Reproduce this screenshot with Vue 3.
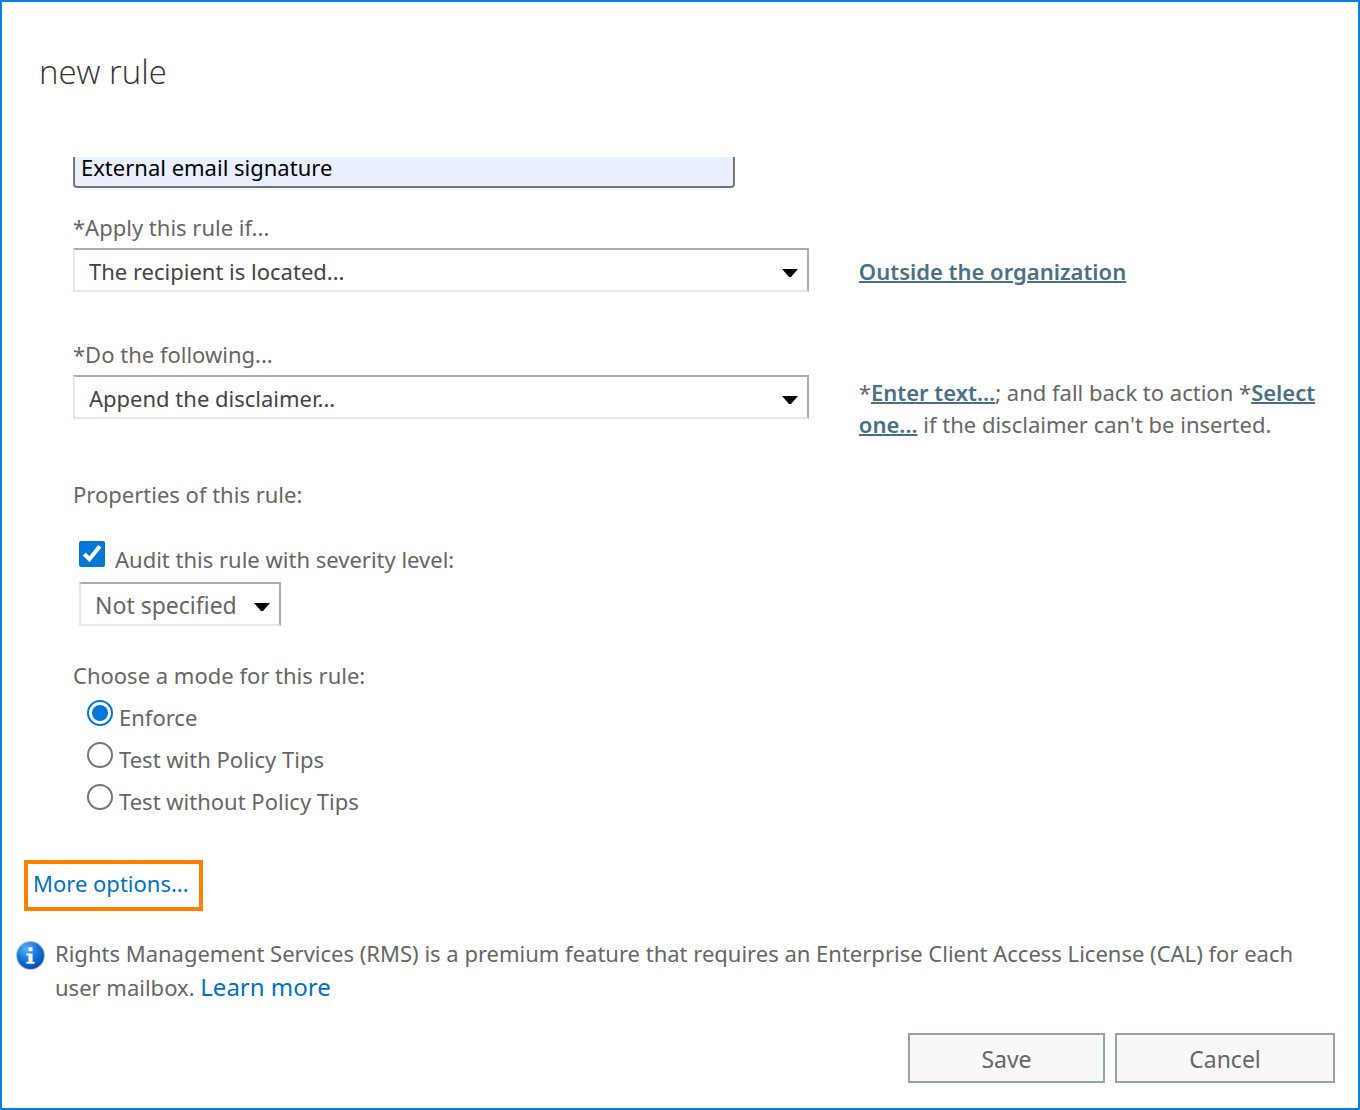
<script setup>
import { ref } from 'vue'

const name = ref('External email signature')
const condition = ref('The recipient is located...')
const action = ref('Append the disclaimer...')
const audit = ref(true)
const severity = ref('Not specified')
const mode = ref('Enforce')
const modes = ['Enforce', 'Test with Policy Tips', 'Test without Policy Tips']
</script>

<template>
  <main class="dialog">
    <h1 class="title">new rule</h1>

    <form class="form" @submit.prevent>
      <div class="scroller">
        <input v-model="name" class="name" type="text" aria-label="Name" />

        <div class="rule">
          <label class="caption" for="condition">*Apply this rule if...</label>
          <div class="picker">
            <select id="condition" v-model="condition" class="select">
              <option>The recipient is located...</option>
            </select>
            <svg class="arrow" viewBox="0 0 16 10"><path d="M0 1H16L9 9H7Z" /></svg>
          </div>
          <p class="detail"><a class="value" href="#">Outside the organization</a></p>
        </div>

        <div class="rule">
          <label class="caption" for="action">*Do the following...</label>
          <div class="picker">
            <select id="action" v-model="action" class="select">
              <option>Append the disclaimer...</option>
            </select>
            <svg class="arrow" viewBox="0 0 16 10"><path d="M0 1H16L9 9H7Z" /></svg>
          </div>
          <p class="detail">
            *<a class="value" href="#">Enter text...</a>; and fall back to action *<a class="value" href="#">Select one...</a> if the disclaimer can't be inserted.
          </p>
        </div>

        <section class="properties">
          <h2 class="heading">Properties of this rule:</h2>
          <div class="audit">
            <label class="option audit-option">
              <input v-model="audit" class="check" type="checkbox" />
              <span class="option-text">Audit this rule with severity level:</span>
            </label>
            <div class="picker severity">
              <select v-model="severity" class="select" aria-label="Severity level">
                <option>Not specified</option>
              </select>
              <svg class="arrow" viewBox="0 0 16 10"><path d="M0 1H16L9 9H7Z" /></svg>
            </div>
          </div>
        </section>

        <fieldset class="modes">
          <legend class="heading">Choose a mode for this rule:</legend>
          <label v-for="m in modes" :key="m" class="option mode-option">
            <input v-model="mode" class="radio" type="radio" name="mode" :value="m" />
            <span class="option-text">{{ m }}</span>
          </label>
        </fieldset>
      </div>

      <a class="more" href="#">More options...</a>

      <div class="notice">
        <svg class="info" viewBox="0 0 28 28" aria-hidden="true">
          <defs>
            <radialGradient id="ball" cx="35%" cy="25%" r="80%">
              <stop offset="0" stop-color="#58b0f4" />
              <stop offset="0.5" stop-color="#1878dc" />
              <stop offset="1" stop-color="#0448b4" />
            </radialGradient>
          </defs>
          <circle cx="14" cy="14" r="14" fill="#a9c1e2" />
          <circle cx="14" cy="14" r="13" fill="url(#ball)" />
          <path d="M12 6h4v4h-4zM10 12h6v8h2v2h-8v-2h2v-6h-2z" fill="#f2f8ff" />
        </svg>
        <p class="notice-text">
          Rights Management Services (RMS) is a premium feature that requires an Enterprise Client Access License (CAL) for each user mailbox. <a class="learn" href="#">Learn more</a>
        </p>
      </div>

      <div class="actions">
        <button class="button save" type="submit">Save</button>
        <button class="button cancel" type="button">Cancel</button>
      </div>
    </form>
  </main>
</template>

<style>
body {
  margin: 0;
  background: #fff;
}
</style>

<style scoped>
* {
  box-sizing: border-box;
}

.dialog {
  min-height: 100vh;
  padding: 46px 23px 25px 14px;
  border: 2px solid #0080e8;
  background: #fff;
  color: #666;
  font: 22px/32px "Segoe UI", "Noto Sans", "Open Sans", sans-serif;
}

.title {
  margin: 0 0 61px;
  padding-left: 23px;
  color: #333;
  font: 300 33px/48px "Segoe UI Light", "Open Sans", "Noto Sans", sans-serif;
}

.scroller {
  overflow: hidden;
  padding-left: 57px;
}

.name {
  display: block;
  width: 100%;
  max-width: 662px;
  height: 44px;
  margin: -13px 0 24px;
  padding: 2px 6px 0;
  border: 2px solid #767676;
  border-radius: 4px;
  background: #e8f0fe;
  color: #000;
  font: inherit;
}

.rule {
  display: grid;
  grid-template-columns: 17fr 11fr;
  column-gap: 50px;
  align-items: start;
  margin-bottom: 47px;
}

.caption {
  grid-column: 1 / -1;
  height: 36px;
  line-height: 30px;
}

.picker {
  position: relative;
}

.select {
  display: block;
  width: 100%;
  height: 44px;
  padding: 2px 14px 0;
  border: 2px solid;
  border-color: #ababb2 #ababb2 #e3e8f0 #e3e8f0;
  border-radius: 0;
  appearance: none;
  background: #fff;
  color: #444;
  font: inherit;
}

.arrow {
  position: absolute;
  top: 20px;
  right: 11px;
  width: 16px;
  height: 10px;
  pointer-events: none;
}

.detail {
  margin: 0;
  padding-top: 7px;
}

.rule + .rule {
  margin-bottom: 38px;
}

.rule + .rule .detail {
  padding: 1px 0;
}

.value {
  color: #4a7085;
  font-weight: 600;
  text-decoration-thickness: 2px;
}

.heading {
  height: 32px;
  margin: 0;
  padding: 0;
  font: inherit;
  line-height: 30px;
}

.audit {
  padding: 30px 0 0 6px;
}

.option {
  display: flex;
  align-items: flex-start;
}

.option-text {
  padding-top: 2px;
}

.check,
.radio {
  flex: none;
  width: 26px;
  height: 26px;
  margin: 0;
  accent-color: #0078d7;
}

.radio {
  border: 2px solid #767676;
  border-radius: 50%;
  appearance: none;
  background: #fff;
}

.radio:checked {
  padding: 3px;
  border-color: #0078d7;
}

.radio:checked::before {
  content: "";
  display: block;
  height: 100%;
  border-radius: 50%;
  background: #0078d7;
}

.audit-option {
  gap: 10px;
  height: 41px;
}

.severity {
  width: 202px;
}

.severity .select {
  color: #666;
  font-size: 23px;
}

.modes {
  margin: 34px 0 0;
  padding: 0;
  border: 0;
}

.mode-option {
  gap: 6px;
  height: 42px;
  padding-left: 14px;
}

.mode-option .option-text {
  padding-top: 1px;
}

.modes .heading {
  height: 40px;
}

.more {
  display: block;
  width: fit-content;
  height: 51px;
  margin: 34px 0 0 8px;
  padding: 3px 10px 0 5px;
  border: 4px solid #ff8000;
  color: #0072c6;
  text-decoration: none;
}

.notice {
  display: flex;
  gap: 10px;
  margin-top: 26px;
}

.info {
  flex: none;
  width: 29px;
  height: 29px;
  margin-top: 4px;
}

.notice-text {
  margin: 0;
  line-height: 33px;
}

.learn {
  color: #0072c6;
  font-size: 24px;
  text-decoration: none;
}

.actions {
  display: flex;
  justify-content: flex-end;
  gap: 10px;
  margin-top: 29px;
}

.button {
  height: 50px;
  padding: 2px 0 0;
  border: 2px solid #96a2a6;
  background: #f8f8f8;
  color: #666;
  font: inherit;
  font-size: 23px;
}

.save {
  width: 197px;
}

.cancel {
  width: 220px;
}
</style>
